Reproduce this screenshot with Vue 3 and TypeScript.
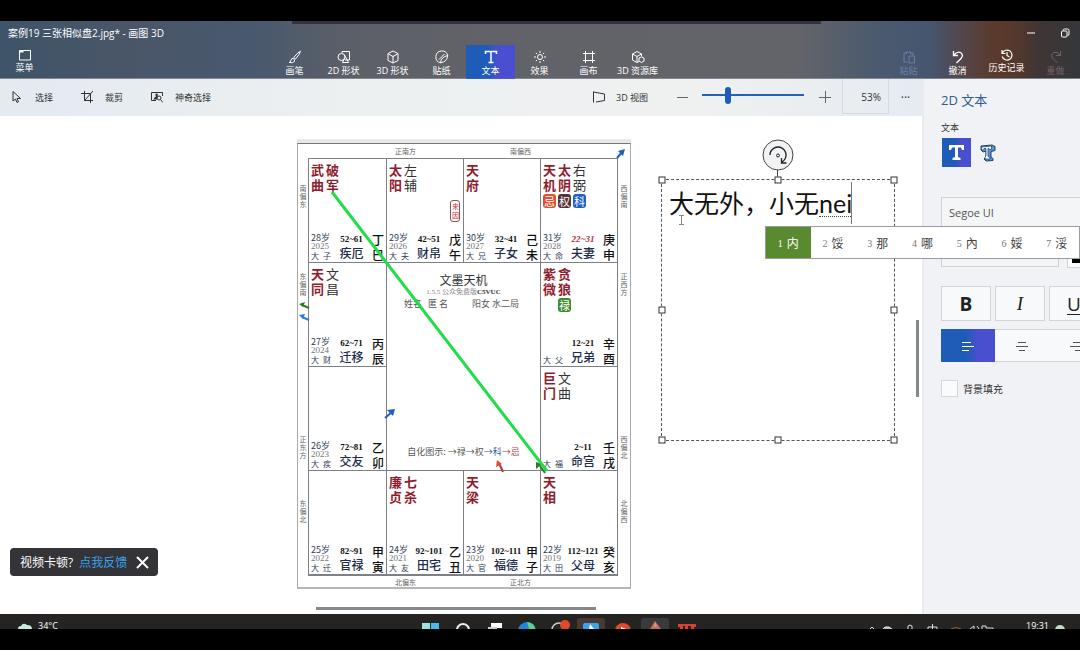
<script setup lang="ts">
import { ref } from 'vue'

interface Star { name: string; red: boolean; tag?: string; tone?: string }
interface Palace {
  row: number
  col: number
  stars: Star[]
  age?: string
  year?: string
  luck: string
  range: string
  name: string
  stem: string
  current?: boolean
  seal?: boolean
}

const red = (name: string, tag?: string, tone?: string): Star => ({ name, red: true, tag, tone })
const ink = (name: string, tag?: string, tone?: string): Star => ({ name, red: false, tag, tone })

const palaces: Palace[] = [
  { row: 1, col: 1, stars: [red('武曲'), red('破军')], age: '28岁', year: '2025', luck: '子', range: '52~61', name: '疾厄', stem: '丁巳' },
  { row: 1, col: 2, stars: [red('太阳'), ink('左辅')], age: '29岁', year: '2026', luck: '夫', range: '42~51', name: '财帛', stem: '戊午', seal: true },
  { row: 1, col: 3, stars: [red('天府')], age: '30岁', year: '2027', luck: '兄', range: '32~41', name: '子女', stem: '己未' },
  { row: 1, col: 4, stars: [red('天机', '忌', 'ji'), red('太阴', '权', 'quan'), ink('右弼', '科', 'ke')], age: '31岁', year: '2028', luck: '命', range: '22~31', name: '夫妻', stem: '庚申', current: true },
  { row: 2, col: 1, stars: [red('天同'), ink('文昌')], age: '27岁', year: '2024', luck: '财', range: '62~71', name: '迁移', stem: '丙辰' },
  { row: 2, col: 4, stars: [red('紫微'), red('贪狼', '禄', 'lu')], luck: '父', range: '12~21', name: '兄弟', stem: '辛酉' },
  { row: 3, col: 1, stars: [], age: '26岁', year: '2023', luck: '疾', range: '72~81', name: '交友', stem: '乙卯' },
  { row: 3, col: 4, stars: [red('巨门'), ink('文曲')], luck: '福', range: '2~11', name: '命宫', stem: '壬戌' },
  { row: 4, col: 1, stars: [], age: '25岁', year: '2022', luck: '迁', range: '82~91', name: '官禄', stem: '甲寅' },
  { row: 4, col: 2, stars: [red('廉贞'), red('七杀')], age: '24岁', year: '2021', luck: '友', range: '92~101', name: '田宅', stem: '乙丑' },
  { row: 4, col: 3, stars: [red('天梁')], age: '23岁', year: '2020', luck: '官', range: '102~111', name: '福德', stem: '甲子' },
  { row: 4, col: 4, stars: [red('天相')], age: '22岁', year: '2019', luck: '田', range: '112~121', name: '父母', stem: '癸亥' },
]

const tabs = [
  { id: 'brush', label: '画笔' },
  { id: 'shape2d', label: '2D 形状' },
  { id: 'shape3d', label: '3D 形状' },
  { id: 'sticker', label: '贴纸' },
  { id: 'text', label: '文本' },
  { id: 'effect', label: '效果' },
  { id: 'canvas', label: '画布' },
  { id: 'library', label: '3D 资源库' },
]
const activeTab = ref('text')

const candidates = ['内', '馁', '那', '哪', '內', '娞', '浽']
const handles = ['nw', 'n', 'ne', 'w', 'e', 'sw', 's', 'se']
const zoom = ref(24)
const content = ref('大无外，小无nei')
const align = ref('left')
const fill = ref(false)
</script>

<template>
  <div class="screen">
    <div class="letterbox"></div>

    <header class="header">
      <div class="capture-bar"></div>
      <div class="titlebar">
        <h1>案例19 三张相似盘2.jpg* - 画图 3D</h1>
        <div class="window-controls">
          <button aria-label="最小化"><svg width="10" height="10" viewBox="0 0 10 10"><path d="M1 5h8" /></svg></button>
          <button aria-label="还原"><svg width="10" height="10" viewBox="0 0 10 10"><rect x="1.500" y="3" width="5.500" height="6" rx="1" /><path d="M3 2.500Q3 1 4.500 1H7.500Q9 1 9 2.500V6Q9 7.500 7.500 7.500" /></svg></button>
        </div>
      </div>
      <div class="ribbon">
        <div class="menu-slot">
          <button class="tool raised">
            <svg width="14" height="12" viewBox="0 0 14 12"><path d="M1.500 1.500h11v9.500h-11z" /><path d="M1.500 2.500h4" stroke-width="2" /></svg>
            <span>菜单</span>
          </button>
        </div>
        <nav class="tabs">
          <button v-for="t in tabs" :key="t.id" class="tool" :class="{ active: activeTab === t.id }" @click="activeTab = t.id">
            <svg width="14" height="14" viewBox="0 0 14 14">
              <template v-if="t.id === 'brush'"><path d="M12.500 1.200Q10 2 5.800 7.500L7.500 9Q12 4 12.500 1.200z" /><path d="M5.500 8.300Q3.500 8 3 10Q2.800 12 1.200 12.500Q5 13.500 6.500 11.300Q7 10 5.500 8.300z" /></template>
              <template v-else-if="t.id === 'shape2d'"><circle cx="4.500" cy="7" r="3.500" /><path d="M5 3V1.500h7.500v8.500H8M7.500 5l4 7.500H5.500L7.500 8" /></template>
              <template v-else-if="t.id === 'shape3d'"><path d="M7 1l5 2.500v7L7 13l-5-2.500v-7zM2.500 4L7 6.500 11.500 4M7 6.500V13" /></template>
              <template v-else-if="t.id === 'sticker'"><path d="M12.700 5.500A6 6 0 1 0 5.500 12.800Q6 7 12.700 5.500zM5.500 12.800Q12 12 12.700 5.500M4 9.500L9.500 4" /></template>
              <template v-else-if="t.id === 'text'"><path d="M1.500 4V1.500h11V4M7 1.500v11M4.500 12.500h5" stroke-width="1.500" /></template>
              <template v-else-if="t.id === 'effect'"><circle cx="7" cy="7" r="2.500" /><path d="M7 1v2M7 11v2M1 7h2M11 7h2M2.800 2.800l1.300 1.300M9.900 9.900l1.300 1.300M2.800 11.200l1.300-1.300M9.900 4.100l1.300-1.300" /></template>
              <template v-else-if="t.id === 'canvas'"><path d="M3.500 1v12M10.500 1v12M1 3.500h12M1 10.500h12" /></template>
              <template v-else><path d="M8 11.500l-2 1-4.500-2.500V4L6 1.500 10.500 4v2M1.500 4L6 6.500 10.500 4M6 6.500v6" /><path d="M8 8l2.500-1.200L13 8v3l-2.500 1.500L8 11z" /></template>
            </svg>
            <span>{{ t.label }}</span>
          </button>
        </nav>
        <div class="actions">
          <button class="tool dim" disabled>
            <svg width="14" height="14" viewBox="0 0 14 14"><path d="M6 12H2V3h3M8 3h3v2.500M4.500 4V2h4v2M7 6h5.500v7H7z" /></svg>
            <span>粘贴</span>
          </button>
          <button class="tool">
            <svg width="14" height="14" viewBox="0 0 14 14"><path d="M2.500 1v4.500H7M2.500 5.500Q6 1 9.500 2.500Q13 5 10 8.500L5.500 13" stroke-width="1.300" /></svg>
            <span>撤消</span>
          </button>
          <button class="tool raised">
            <svg width="14" height="12" viewBox="0 0 14 12"><path d="M2 1v3.500h3.500M2.300 4.300A5 5 0 1 1 2.200 7.500M7 3v3.500l2.500 1.500" stroke-width="1.200" /></svg>
            <span>历史记录</span>
          </button>
          <button class="tool dark" disabled>
            <svg width="14" height="14" viewBox="0 0 14 14"><path d="M11.500 1v4.500H7M11.500 5.500Q8 1 4.500 2.500Q1 5 4 8.500L8.500 13" /></svg>
            <span>重做</span>
          </button>
        </div>
      </div>
    </header>

    <div class="workspace">
      <main class="stage">
        <div class="toolbar">
          <div class="group left">
            <button><svg width="12" height="14" viewBox="0 0 12 14"><path d="M2 1.500v9.500l2.500-2 1.500 3.500 1.500-.700L6 8.500h3.500z" /></svg>选择</button>
            <button><svg width="12" height="14" viewBox="0 0 12 14"><path d="M3.500 1v9.500H12M0 3.500h9.500V13M3.500 10.500L12 1" /></svg>裁剪</button>
            <button><svg width="12" height="14" viewBox="0 0 12 14"><path d="M5 10.500H.500v-8h11V6" /><path d="M2.500 9.500Q3 7 5 6.500Q3.500 3.500 5.500 3.500T6.500 6.500L6 9.500z" fill="#333" stroke="none" /><circle cx="8" cy="8" r="2" /><path d="M9.500 9.500l2.500 3" /></svg>神奇选择</button>
          </div>
          <div class="group right">
            <button class="view"><svg width="14" height="14" viewBox="0 0 14 14"><path d="M1.500 1.500v11M1.500 2l11 2v6.500L4 12" /></svg>3D 视图</button>
            <button class="step" aria-label="缩小"><svg width="12" height="12" viewBox="0 0 12 12"><path d="M.500 6.500h11" /></svg></button>
            <input v-model="zoom" type="range" min="0" max="100" aria-label="缩放" />
            <button class="step" aria-label="放大"><svg width="12" height="12" viewBox="0 0 12 12"><path d="M0 6.500h12M6.500 0v12" /></svg></button>
            <output>53%</output>
            <button class="more" aria-label="更多">···</button>
          </div>
        </div>

        <div class="canvas">
          <section class="chart">
            <div class="dir top"><span>正南方</span><span>南偏西</span></div>
            <div class="dir side west"><div><span>南偏东</span><span>东偏南</span></div><div><span>正东方</span><span>东偏北</span></div></div>
            <div class="palaces">
              <article v-for="p in palaces" :key="p.stem" class="palace" :style="{ gridArea: `${p.row} / ${p.col}` }">
                <div class="stars">
                  <div v-for="s in p.stars" :key="s.name" class="star" :class="{ red: s.red }">
                    <span>{{ s.name }}</span>
                    <b v-if="s.tag" :class="s.tone">{{ s.tag }}</b>
                  </div>
                </div>
                <span v-if="p.seal" class="seal">来因</span>
                <div class="info">
                  <div class="years">
                    <span class="age">{{ p.age }}</span>
                    <span class="year">{{ p.year }}</span>
                    <span class="luck"><i>大</i><i>{{ p.luck }}</i></span>
                  </div>
                  <div class="middle">
                    <span class="range" :class="{ current: p.current }">{{ p.range }}</span>
                    <span class="name">{{ p.name }}</span>
                  </div>
                  <span class="stem">{{ p.stem }}</span>
                </div>
              </article>
              <div class="center">
                <h2>文墨天机</h2>
                <small>1.5.5 公众免费版<b>C5VUC</b></small>
                <p class="person"><span>姓名</span><span>匿 名</span><span class="kind-of">阳女 水二局</span></p>
                <p class="legend">自化图示: →禄→权<span class="blue">→科</span><span class="crimson">→忌</span></p>
              </div>
            </div>
            <div class="dir side east"><div><span>西偏南</span><span>正西方</span></div><div><span>西偏北</span><span>北偏西</span></div></div>
            <div class="dir bottom"><span>北偏东</span><span>正北方</span></div>
            <svg class="marks" width="334" height="450" viewBox="0 0 334 450">
              <g fill="none" stroke-width="2">
                <path d="M88 279l8-7" stroke="#1c62b8" /><path d="M90 271l8-1-2 7z" fill="#1c62b8" />
                <path d="M320 19l6-7" stroke="#1c62b8" /><path d="M321 12l7-2-2 7z" fill="#1c62b8" />
                <path d="M12 169l-7-3" stroke="#2f7a2a" /><path d="M2 165l6-2-2 5z" fill="#2f7a2a" />
                <path d="M12 181l-7-3" stroke="#2e7be0" /><path d="M2 176l6-1-2 5z" fill="#2e7be0" />
                <path d="M206 333l-4-9" stroke="#b03a34" /><path d="M199 328l1-7 5 4z" fill="#e0502e" />
                <path d="M248 334l-5-7" stroke="#2f7a2a" /><path d="M239 330v-7l6 2z" fill="#2f7a2a" />
                <path d="M35 53L250 332" stroke="#22dc48" stroke-width="3" />
              </g>
            </svg>
          </section>

          <div class="textbox">
            <div class="rotate"><svg width="32" height="32" viewBox="0 0 32 32"><circle cx="16" cy="16" r="15" fill="#f1f3f5" stroke="#444" /><path d="M8 16a8 8 0 1 1 12 7M19.500 19v5h5" fill="none" stroke="#222" stroke-width="1.300" /><circle cx="16" cy="16.500" r="1.500" fill="none" stroke="#222" /></svg></div>
            <i v-for="h in handles" :key="h" class="handle" :class="h"></i>
            <textarea v-model="content" aria-label="文本内容" spellcheck="false"></textarea>
            <i class="compose"></i>
            <i class="caret"></i>
            <svg class="ibeam" width="5" height="10" viewBox="0 0 5 10"><path d="M0 .500h5M0 9.500h5M2.500 0v10" stroke="#888" /></svg>
          </div>
          <div class="scroll-y"></div>
          <div class="scroll-x"></div>
        </div>

        <div class="toast">
          <span>视频卡顿?</span>
          <a href="#">点我反馈</a>
          <button aria-label="关闭"><svg width="13" height="13" viewBox="0 0 13 13"><path d="M1 1l11 11M12 1L1 12" stroke="#fff" stroke-width="2" /></svg></button>
        </div>
      </main>

      <aside class="panel">
        <div class="panel-inner">
          <h2>2D 文本</h2>
          <h3>文本</h3>
          <div class="kinds">
            <button class="kind on" aria-label="2D 文本"><svg width="29" height="29" viewBox="0 0 29 29"><path d="M7 7h15v5h-2l-1-2.500h-3V19l2.500 1v2h-8v-2l2.500-1V9.500h-3L9 12H7z" fill="#fff" /></svg></button>
            <button class="kind" aria-label="3D 文本"><svg width="18" height="18" viewBox="0 0 18 18"><path d="M2 2l11-1 3 1.500v4l-4 1v6l2 1v2L7 17l-2-2 2-2V7L4 8 2 6z" fill="#5b94d6" stroke="#223f68" /><path d="M2.500 3l10-1v3l-2 .500-.500-1H9v8l2 1v1.500H6V13l1-1V4.500H5L4 6H2.500z" fill="#fff" stroke="#284a78" stroke-width=".800" /></svg></button>
          </div>
          <select class="font" aria-label="字体"><option>Segoe UI</option></select>
          <div class="size-row">
            <select aria-label="字号"><option>24</option></select>
            <button class="swatch" aria-label="颜色"><i></i></button>
          </div>
          <div class="styles">
            <button aria-label="加粗"><b>B</b></button>
            <button aria-label="斜体"><em>I</em></button>
            <button aria-label="下划线"><u>U</u></button>
          </div>
          <div class="aligns">
            <button :class="{ on: align === 'left' }" aria-label="左对齐" @click="align = 'left'"><svg width="12" height="10" viewBox="0 0 12 10"><path d="M0 1.500h9M0 5.500h12M0 9.500h7" /></svg></button>
            <button :class="{ on: align === 'center' }" aria-label="居中" @click="align = 'center'"><svg width="12" height="10" viewBox="0 0 12 10"><path d="M2 1.500h8M0 5.500h12M3 9.500h6" /></svg></button>
            <button :class="{ on: align === 'right' }" aria-label="右对齐" @click="align = 'right'"><svg width="12" height="10" viewBox="0 0 12 10"><path d="M3 1.500h9M0 5.500h12M5 9.500h7" /></svg></button>
          </div>
          <label class="fill"><input v-model="fill" type="checkbox" />背景填充</label>
        </div>
      </aside>

      <div class="ime">
        <button v-for="(c, i) in candidates" :key="i" :class="{ first: i === 0 }"><small>{{ i + 1 }}</small>{{ c }}</button>
      </div>
    </div>

    <footer class="taskbar">
      <div class="weather">
        <svg width="16" height="15" viewBox="0 0 16 15"><path d="M1 15Q1 12 4 12Q6 8 10 11Q15 11 15 15z" fill="#c7e9e2" /></svg>
        <span>34°C</span>
      </div>
      <div class="apps">
        <svg viewBox="0 0 32 15"><path d="M7 9h8v6H7z" fill="#9de4dc" /><path d="M16 9h8v6h-8z" fill="#4db8f0" /></svg>
        <svg viewBox="0 0 32 15"><circle cx="16" cy="16" r="6" fill="none" stroke="#eee" stroke-width="2" /></svg>
        <svg viewBox="0 0 32 15"><path d="M12 9h11v5H12z" fill="#fff" /><path d="M9 13h9v2H9z" fill="#ccc" /></svg>
        <svg viewBox="0 0 32 15"><circle cx="16" cy="17" r="9" fill="#2385d8" /><path d="M16 8q8 1 8 7h-6q-1-4-2-7z" fill="#5fd28a" /></svg>
        <svg viewBox="0 0 32 15"><circle cx="16" cy="16" r="7" fill="none" stroke="#ccc" stroke-width="1.500" /><circle cx="22" cy="11" r="5" fill="#de4a2b" /></svg>
        <svg viewBox="0 0 32 15"><rect x="2" y="4" width="28" height="20" rx="3" fill="#4a3930" /><rect x="8" y="9" width="16" height="14" rx="2" fill="#36a5ee" /><path d="M15 10l4 5h-5z" fill="#fff" /></svg>
        <svg viewBox="0 0 32 15"><circle cx="16" cy="17" r="8" fill="#de4a2b" /><path d="M14 13l5 2h-5z" fill="#fff" /></svg>
        <svg viewBox="0 0 32 15"><rect x="2" y="4" width="28" height="20" rx="3" fill="#3a3a3d" /><path d="M16 7l6 8H11z" fill="#d8636a" /><path d="M16 8l2 4-3 1z" fill="#9cc35d" /></svg>
        <svg viewBox="0 0 32 15"><path d="M7 10h18v3h-2v2h-3v-3h-3v3h-3v-3h-2v3H9v-2H7z" fill="#d9412e" /></svg>
      </div>
      <div class="tray">
        <svg width="132" height="15" viewBox="0 0 132 15" fill="none" stroke="#ddd"><path d="M7 15l2-2 2 2" /><path d="M20 15q1-3 6-2l3 2" fill="#bbb" /><path d="M45 15v-3q2-2 4 0v3" /><path d="M65 15v-2h9v2M69.500 10v5" /><path d="M88 15q5-3 10 0" stroke="#a2603c" /><path d="M107 15l4-3v3M114 12l2 3M119 15v-3h4v2h7v1" /></svg>
        <span>19:31</span>
        <svg width="12" height="15" viewBox="0 0 12 15"><circle cx="6" cy="16" r="5" fill="#b9dfc8" /></svg>
      </div>
    </footer>
    <div class="letterbox"></div>
  </div>
</template>

<style>
body { margin: 0; background: #000; overflow: hidden; }
</style>

<style scoped>
* { box-sizing: border-box; }
.screen { display: flex; flex-direction: column; height: 100vh; overflow: hidden; font-family: "Open Sans", "Noto Sans CJK SC", sans-serif; color: #333; }
button { margin: 0; padding: 0; border: 0; background: none; color: inherit; font: inherit; cursor: pointer; }
h1, h2, h3, p { margin: 0; font-weight: 400; }
i { font-style: normal; }
svg { display: block; flex: none; }
.letterbox { flex: none; height: 21px; background: #000; }

.header { position: relative; flex: none; height: 58px; color: #fff; border-bottom: 1px solid #7c828a; background: linear-gradient(90deg, #3e5468 0%, #4a5668 12%, #48586e 23%, #5b5f68 32%, #626368 45%, #626469 74%, #4b5a6e 81%, #46566f 86%, #53464c 89%, #5a3a2c 92%, #55382c 94%, #403534 96%, #35373b 100%); }
.header svg { fill: none; stroke: currentColor; stroke-width: 1; }
.capture-bar { position: absolute; left: 27%; right: 24%; top: 0; height: 3px; background: #34323a; }
.titlebar { display: flex; justify-content: space-between; align-items: center; height: 24px; padding: 0 10px 0 8px; }
.titlebar h1 { font-size: 10px; line-height: 16px; }
.window-controls { display: flex; gap: 24px; }
.ribbon { display: grid; grid-template-columns: 270fr auto 418fr; height: 34px; }
.tabs, .actions { display: flex; }
.actions { justify-content: flex-end; }
.tool { display: flex; flex-direction: column; align-items: center; width: 49px; height: 34px; padding-top: 5px; font-size: 9px; line-height: 12px; gap: 1px; white-space: nowrap; }
.tool.raised { padding-top: 4px; }
.tool.active { background: linear-gradient(90deg, #1f5cb8 45%, #4a4fd0 65%); }
.tool.dim { color: #6680a5; }
.tool.dark { color: #6c6569; }

.workspace { position: relative; display: flex; flex: 1; min-height: 0; background: #fff; }
.stage { position: relative; display: flex; flex-direction: column; flex: 1; min-width: 0; }
.toolbar { display: flex; justify-content: space-between; flex: none; height: 37px; background: linear-gradient(90deg, #e3eaf0, #edf0f1 40%, #eff1f1 75%, #e5ebf1); box-shadow: 0 1px 2px #e9eced; font-size: 9px; }
.toolbar svg { fill: none; stroke: #333; stroke-width: 1; }
.group { display: flex; align-items: center; height: 36px; }
.group.left { gap: 28px; padding-left: 11px; }
.group.left button { display: flex; align-items: center; gap: 12px; }
.view { display: flex; align-items: center; gap: 10px; margin-right: 28px; }
.toolbar .step svg { stroke: #666; shape-rendering: crispEdges; }
.toolbar input { appearance: none; width: 102px; height: 18px; margin: 0 15px 4px 14px; background: linear-gradient(#2462b5, #2462b5) center / 100% 2px no-repeat; }
.toolbar input::-webkit-slider-thumb { appearance: none; width: 6px; height: 17px; border-radius: 3px; background: #1f5cb8; }
.toolbar output { width: 47px; height: 35px; margin: 0 0 1px 11px; padding-right: 7px; border: 1px solid #d6dadd; border-top: 0; font-size: 10px; line-height: 36px; text-align: right; }
.more { width: 33px; font-size: 12px; }

.canvas { position: relative; flex: 1; overflow: hidden; background: #fff; }
.chart { position: absolute; left: 297px; top: 27px; width: 334px; display: grid; grid-template-columns: 10px 1fr 12px; grid-template-rows: 14px auto 11px; border: 1px solid #a6a9ad; border-top-color: #777; border-bottom: 2px solid #b4b6b8; }
.chart::before { content: ""; position: absolute; left: -1px; right: -1px; top: -5px; height: 4px; background: #e6e8ea; }
.dir { color: #666; font-family: "Noto Sans CJK SC", sans-serif; font-size: 7px; line-height: 8px; }
.top, .bottom { grid-column: 1 / -1; display: flex; justify-content: center; align-items: center; gap: 94px; padding-right: 2px; }
.side div { height: 208px; display: flex; flex-direction: column; align-items: center; gap: 64px; padding-top: 26px; }
.side div + div { gap: 40px; padding-top: 69px; }
.side span { width: 7px; word-break: break-all; }
.palaces { display: grid; grid-template-columns: repeat(4, 1fr); grid-template-rows: repeat(4, 104px); border: solid #7d8086; border-width: 0 1px 2px 1px; font-family: "Noto Sans CJK SC", sans-serif; }
.palace { position: relative; display: flex; flex-direction: column; justify-content: space-between; min-width: 0; padding: 3px 1px 0; border: solid #7d8086; border-width: 1px 0 0 1px; }
.palace:nth-child(1), .palace:nth-child(5), .palace:nth-child(7), .palace:nth-child(9) { border-left: 0; }
.stars { display: flex; }
.star { display: flex; flex-direction: column; align-items: center; gap: 2px; width: 15px; font-size: 13px; line-height: 15px; color: #333; }
.star.red { color: #8f1c2e; font-weight: 700; }
.star span { width: 13px; word-break: break-all; }
.star b { width: 13px; height: 14px; border-radius: 3px; color: #fff; font-size: 11px; font-weight: 400; line-height: 14px; text-align: center; }
.ji { background: #df5130; }
.quan { background: #563239; }
.ke { background: #1c62c4; }
.lu { background: #3d8b2c; }
.seal { position: absolute; right: 3px; top: 41px; width: 10px; padding: 1px 0 1px 1px; border: 1px solid #8e5258; border-radius: 3px; color: #c2333c; font-size: 7px; line-height: 9px; word-break: break-all; }
.info { display: grid; grid-template-columns: 22px 1fr 14px; align-items: end; height: 30px; }
.years { display: flex; flex-direction: column; padding: 0 0 2px 1px; font-size: 9px; line-height: 9px; color: #2f3e58; white-space: nowrap; }
.year { font-family: "Liberation Serif", serif; color: #777; }
.luck { display: flex; gap: 4px; font-size: 8px; }
.middle { display: flex; flex-direction: column; align-items: center; padding-bottom: 2px; }
.range { font: 700 9px/12px "Liberation Serif", serif; color: #111; }
.range.current { color: #b8303e; font-style: italic; }
.name { font-size: 12px; font-weight: 500; line-height: 15px; color: #1d2d4d; }
.stem { justify-self: center; width: 12px; font-size: 12px; font-weight: 500; line-height: 15px; color: #111; word-break: break-all; }
.center { grid-area: 2 / 2 / 4 / 4; display: flex; flex-direction: column; align-items: center; padding: 9px 0 10px; border: solid #7d8086; border-width: 1px 0 0 1px; color: #555; }
.center h2 { font-size: 12px; line-height: 16px; color: #333; }
.center small { font: 7px/8px "Liberation Serif", "Noto Sans CJK SC", serif; color: #888; }
.center b { color: #333; }
.center p { font-size: 9px; line-height: 16px; white-space: nowrap; }
.person { display: flex; gap: 6px; padding-right: 4px; }
.kind-of { padding-left: 18px; }
.legend { margin-top: auto; }
.blue { color: #2a62ac; }
.crimson { color: #c03b42; }
.marks { position: absolute; left: -1px; top: -5px; pointer-events: none; }

.textbox { position: absolute; left: 661px; top: 63px; width: 234px; height: 262px; border: 1px dashed #555; }
.rotate { position: absolute; left: 50%; top: -41px; margin-left: -16px; }
.rotate::after { content: ""; position: absolute; left: 15px; top: 31px; width: 1px; height: 10px; background: #444; }
.handle { position: absolute; width: 7px; height: 7px; border: 1px solid #333; background: #fff; transform: translate(-50%, -50%); }
.nw { left: 0; top: 0; } .n { left: 50%; top: 0; } .ne { left: 100%; top: 0; }
.w { left: 0; top: 50%; } .e { left: 100%; top: 50%; }
.sw { left: 0; top: 100%; } .s { left: 50%; top: 100%; } .se { left: 100%; top: 100%; }
textarea { display: block; width: 100%; height: 100%; padding: 5px 0 0 7px; border: 0; outline: 0; resize: none; overflow: hidden; background: transparent; color: #111; font: 25px/36px Lato, "Noto Sans CJK SC", sans-serif; }
.compose { position: absolute; left: 157px; top: 36px; width: 32px; border-bottom: 1px dotted #444; }
.caret { position: absolute; left: 189px; top: 2px; width: 1px; height: 42px; background: #777; }
.ibeam { position: absolute; left: 17px; top: 35px; }
.scroll-y { position: absolute; right: 3px; top: 204px; width: 3px; height: 77px; background: #85878a; }
.scroll-x { position: absolute; left: 316px; bottom: 4px; width: 280px; height: 3px; background: #85878a; }

.toast { position: absolute; left: 10px; bottom: 38px; display: flex; align-items: center; height: 28px; padding: 0 9px 0 10px; border-radius: 4px; background: #333338; color: #fff; font-size: 12px; }
.toast a { margin: 0 9px 0 6px; color: #37a3ee; text-decoration: none; }

.panel { flex: none; width: 158px; overflow: hidden; background: #f0f2f5; border-left: 2px solid #e9ecef; }
.panel-inner { width: 179px; padding: 10px 0 0 17px; }
.panel h2 { font-size: 13px; line-height: 22px; color: #2c5c9c; }
.panel h3 { margin: 10px 0 3px; font-size: 9px; line-height: 14px; }
.kinds { display: flex; align-items: center; gap: 8px; padding-left: 1px; }
.kind.on { background: linear-gradient(90deg, #1f5cb8 45%, #4a4fd0 65%); }
select { appearance: none; height: 32px; padding: 0 7px 2px; border: 1px solid #d0d3d6; border-radius: 0; background: #f4f5f7; color: #555; font: 11px "Open Sans", sans-serif; }
.font { display: block; width: 100%; margin: 30px 0 6px; }
.size-row { display: flex; gap: 8px; }
.size-row select { width: 118px; }
.swatch { width: 36px; padding: 4px; border: 1px solid #d0d3d6; background: #fafbfc; }
.swatch i { display: block; height: 23px; background: #000; }
.styles { display: flex; gap: 4px; margin: 18px 0 8px; }
.styles button { width: 50px; height: 35px; border: 1px solid #d2d5d8; background: #f8f9fb; color: #222; font-size: 19px; line-height: 28px; }
.styles em { font-family: "Liberation Serif", serif; }
.styles u { text-underline-offset: 3px; }
.aligns { display: flex; height: 33px; border: solid #d2d5d8; border-width: 1px 0; background: #f8f9fb; }
.aligns button { display: grid; place-items: center; flex: 1; margin: -1px 0; }
.aligns svg { stroke: #555; }
.aligns .on { background: linear-gradient(90deg, #1f5cb8 45%, #4a4fd0 70%); }
.aligns .on svg { stroke: #fff; }
.fill { display: flex; align-items: center; gap: 5px; margin-top: 18px; font-size: 10px; }
.fill input { appearance: none; width: 17px; height: 17px; margin: 0; border: 1px solid #d5d8db; background: #fafbfc; }
.fill input:checked { background: #1f5cb8; }

.ime { position: absolute; left: 765px; right: 0; top: 147px; display: flex; height: 33px; border: 1px solid #9a9c9f; background: #fff; color: #444; font-family: "Liberation Serif", "Noto Sans CJK SC", serif; font-size: 12px; }
.ime button { display: flex; align-items: center; justify-content: center; gap: 4px; flex: 1; }
.ime small { padding-top: 2px; font-size: 10px; color: #777; }
.ime .first, .ime .first small { background: #5a8a2f; color: #fff; }

.taskbar { flex: none; display: grid; grid-template-columns: 1fr auto 1fr; height: 15px; overflow: hidden; background: #252422; color: #fff; font-size: 9px; line-height: 23px; }
.weather { display: flex; gap: 5px; padding-left: 17px; }
.apps { display: flex; padding-left: 38px; }
.apps svg { width: 32px; height: 15px; }
.tray { display: flex; justify-content: flex-end; gap: 4px; padding-right: 14px; }
.tray span { padding: 0 1px 0 27px; }
</style>
